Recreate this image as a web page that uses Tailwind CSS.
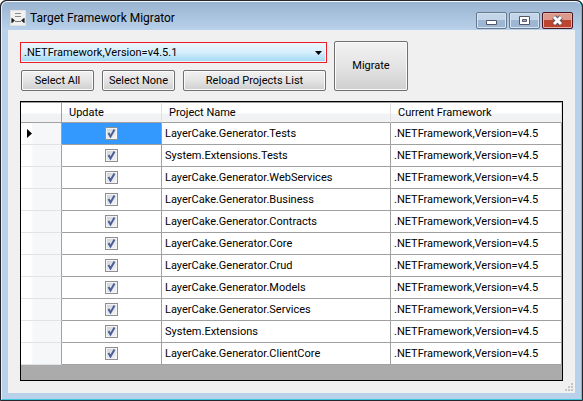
<!DOCTYPE html>
<html lang="en">
<head>
<meta charset="utf-8">
<title>Target Framework Migrator</title>
<script src="https://cdn.jsdelivr.net/npm/@tailwindcss/browser@4"></script>
</head>
<body class="bg-white text-black">
<div class="flex min-h-screen flex-col rounded-t-md border border-[#26262e] bg-black">
<div class="flex flex-1 flex-col rounded-t-md border border-t-[#f4f8fc] border-l-[#e4eefa] border-r-[#3fd0ee] border-b-[#3cc8dc] bg-[#b9d1ea] px-1.5 pb-1.5">
  <header class="-mx-1.5 flex h-7 items-center rounded-t-md bg-linear-to-b from-[#99b4d1] to-[#b9d1ea] pl-2">
    <svg class="mt-1 size-4 shrink-0" viewBox="0 0 16 16" aria-hidden="true">
      <path fill="#f1f1f1" stroke="#e0e0e0" d="M.5.5h15v15H.5z"/>
      <path stroke="#8a8a8a" d="M5 3.500h6M5 6.500h6"/>
      <path stroke="#777" d="M1.500 8v5M14.500 8v5M5 11.500h6"/>
      <path fill="#222" d="M2 8l3 2.500L2 13zM14 8l-3 2.500 3 2.500z"/>
    </svg>
    <h1 class="ml-1 mt-1 grow font-['Roboto',sans-serif] text-[12px] leading-4">Target Framework Migrator</h1>
    <div class="mr-2 mt-2 flex gap-0.5">
      <button aria-label="Minimize" class="flex h-[17px] w-[31px] items-center justify-center rounded-xs border border-[#66798f] bg-linear-to-b from-[#c3d5e8] from-50% to-[#9db7d3] to-50% shadow-[inset_0_0_0_1px_#d5e3f2]">
        <svg class="h-[11px] w-[13px]" viewBox="0 0 13 11" aria-hidden="true"><path fill="#fff" stroke="#535666" d="M1.500 5.500h10v4h-10z"/></svg>
      </button>
      <button aria-label="Maximize" class="flex h-[17px] w-[31px] items-center justify-center rounded-xs border border-[#66798f] bg-linear-to-b from-[#c3d5e8] from-50% to-[#9db7d3] to-50% shadow-[inset_0_0_0_1px_#d5e3f2]">
        <svg class="h-[11px] w-[13px]" viewBox="0 0 13 11" aria-hidden="true"><path fill="#fff" stroke="#535666" d="M1.500 1.500h10v8h-10z"/><path fill="#9db7d3" stroke="#535666" d="M4.500 4.500h4v2h-4z"/></svg>
      </button>
      <button aria-label="Close" class="flex h-[17px] w-[31px] items-center justify-center rounded-xs border border-[#4a1420] bg-linear-to-b from-[#dd9a8c] from-50% to-[#bd4530] to-50% shadow-[inset_0_0_0_1px_#e8b0a4]">
        <svg class="h-[11px] w-[13px]" viewBox="0 0 13 11" fill="none" aria-hidden="true"><path stroke="#535666" stroke-width="5" d="M3 2l7 7M10 2L3 9"/><path stroke="#fff" stroke-width="3" d="M3 2l7 7M10 2L3 9"/></svg>
      </button>
    </div>
  </header>

  <main class="relative flex flex-1 flex-col gap-2.5 bg-[#f0f0f0] px-3 pb-3 pt-[11px] font-['Roboto',sans-serif] text-[11px] leading-4">
    <div class="flex gap-[7px]">
      <div class="flex w-[307px] flex-col gap-[7px] pt-px">
        <div class="grid border border-[#ed1c24]">
          <select id="framework" aria-label="Target framework" class="col-start-1 row-start-1 h-[19px] w-full appearance-none border border-[#e8f6fd] bg-linear-to-b from-[#eaf6fd] from-0% via-[#d5effc] via-50% to-[#a5d9f5] px-0.5 leading-4">
            <option>.NETFramework,Version=v4.5.1</option>
          </select>
          <svg class="pointer-events-none col-start-1 row-start-1 mr-1 h-1 w-[7px] self-center justify-self-end" viewBox="0 0 7 4" aria-hidden="true"><path d="M0 0h7L3.500 4z"/></svg>
        </div>
        <div class="flex gap-2 px-px">
          <button class="h-[21px] w-[73px] rounded-xs border border-[#707070] bg-linear-to-b from-[#f2f2f2] via-[#e4e4e4] to-[#cfcfcf] shadow-[inset_0_0_0_1px_#fafafa]">Select All</button>
          <button class="h-[21px] w-[73px] rounded-xs border border-[#707070] bg-linear-to-b from-[#f2f2f2] via-[#e4e4e4] to-[#cfcfcf] shadow-[inset_0_0_0_1px_#fafafa]">Select None</button>
          <button class="h-[21px] grow rounded-xs border border-[#707070] bg-linear-to-b from-[#f2f2f2] via-[#e4e4e4] to-[#cfcfcf] shadow-[inset_0_0_0_1px_#fafafa]">Reload Projects List</button>
        </div>
      </div>
      <button class="w-[74px] rounded-xs border border-[#707070] bg-linear-to-b from-[#f2f2f2] via-[#e4e4e4] via-50% to-[#cfcfcf] shadow-[inset_0_0_0_1px_#fafafa]">Migrate</button>
    </div>

    <div class="flex-1 border border-black bg-[#ababab]">
      <table class="w-full table-fixed border-separate border-spacing-0 bg-white text-left">
        <colgroup><col class="w-[41px]"><col class="w-[100px]"><col class="w-[229px]"><col></colgroup>
        <thead>
          <tr class="h-[21px] bg-linear-to-b from-white from-50% to-[#f1f2f4] to-60%">
            <td class="border-y border-r border-[#a0a0a0] p-0"></td>
            <th class="border-y border-r border-y-[#a0a0a0] border-r-[#dfe1e4] py-0 pl-[7px] font-normal">Update</th>
            <th class="border-y border-r border-y-[#a0a0a0] border-r-[#dfe1e4] py-0 pl-[7px] font-normal">Project Name</th>
            <th class="border-y border-r border-y-[#a0a0a0] border-r-[#dfe1e4] py-0 pl-[7px] font-normal">Current Framework</th>
          </tr>
        </thead>
        <tbody id="projects"></tbody>
      </table>
    </div>

    <svg class="absolute bottom-0.5 right-0.5 size-2" viewBox="0 0 8 8" fill="#c4c4c4" aria-hidden="true"><path d="M6 0h2v2H6zM3 3h2v2H3zM6 3h2v2H6zM0 6h2v2H0zM3 6h2v2H3zM6 6h2v2H6z"/></svg>
  </main>
</div>
</div>

<script>
const names = ["LayerCake.Generator.Tests", "System.Extensions.Tests", "LayerCake.Generator.WebServices", "LayerCake.Generator.Business", "LayerCake.Generator.Contracts", "LayerCake.Generator.Core", "LayerCake.Generator.Crud", "LayerCake.Generator.Models", "LayerCake.Generator.Services", "System.Extensions", "LayerCake.Generator.ClientCore"];
const arrow = '<svg class="ml-1.5 h-[9px] w-[5px]" viewBox="0 0 5 9" aria-hidden="true"><path d="M0 0l5 4.500L0 9z"/></svg>';
document.getElementById("projects").innerHTML = names.map((name, i) => `
  <tr class="h-[22px]">
    <td class="border-b border-r border-b-[#e3e3e3] border-r-[#a0a0a0] bg-linear-to-r from-white from-25% to-[#f6f7f9] to-30% p-0">${i === 0 ? arrow : ""}</td>
    <td class="border-b border-r border-[#a0a0a0] p-0 ${i === 0 ? "bg-[#3399ff]" : "bg-white"}">
      <label class="mx-auto grid size-[13px]">
        <input type="checkbox" checked aria-label="Update ${name}" class="col-start-1 row-start-1 size-[13px] appearance-none border border-[#8e8f8f] bg-linear-to-br from-[#cdd2da] to-[#f6f6f6] shadow-[inset_0_0_0_1px_#f4f4f4]">
        <svg class="pointer-events-none col-start-1 row-start-1 size-[13px]" viewBox="0 0 13 13" fill="none" stroke="#4a5f97" stroke-width="2" aria-hidden="true"><path d="M3.500 6l2 3.500L9.500 2.500"/></svg>
      </label>
    </td>
    <td class="border-b border-r border-[#a0a0a0] py-0 pl-[3px]">${name}</td>
    <td class="border-b border-r border-[#a0a0a0] py-0 pl-[3px]">.NETFramework,Version=v4.5</td>
  </tr>`).join("");
</script>
</body>
</html>
